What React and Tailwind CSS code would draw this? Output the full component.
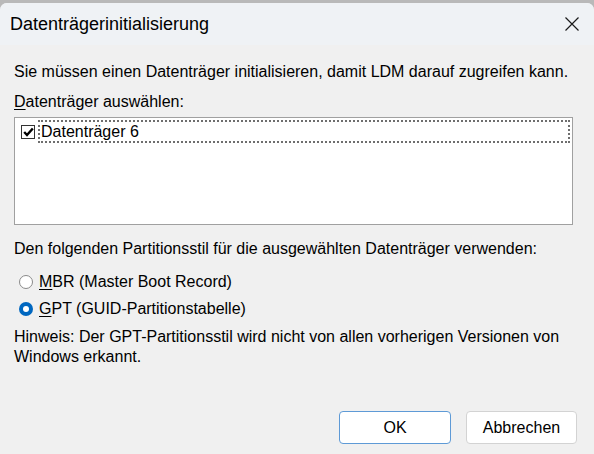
import React from "react";

const Radio = ({ checked }) =>
    checked ? (
        <span className="w-[14px] h-[14px] rounded-full bg-[#0067c0] flex items-center justify-center shrink-0">
            <span className="w-[6px] h-[6px] rounded-full bg-white" />
        </span>
    ) : (
        <span className="w-[14px] h-[14px] rounded-full border border-[#8a8a8a] bg-white shrink-0" />
    );

export default function App() {
    return (
        <div className="w-[594px] h-[454px] bg-[#b9b9b9] pt-[3px] overflow-hidden font-['Liberation_Sans',Arial,sans-serif] text-black">
            <div className="h-[451px] rounded-t-[7px] bg-[#f0f0f0] flex flex-col">
                <div className="h-[42px] bg-[#eff2f5] rounded-t-[7px] flex items-center justify-between pl-[10px] pr-[12px]">
                    <span className="text-[18px] leading-none">Datenträgerinitialisierung</span>
                    <svg width="16" height="16" viewBox="0 0 16 16" className="mr-[2px]">
                        <path d="M1.5 1.5 L14.5 14.5 M14.5 1.5 L1.5 14.5" stroke="#1a1a1a" strokeWidth="1.2" fill="none" />
                    </svg>
                </div>

                <div className="flex flex-col px-[14px] text-[16px] leading-[18px]">
                    <p className="mt-[18px]">Sie müssen einen Datenträger initialisieren, damit LDM darauf zugreifen kann.</p>
                    <p className="mt-[12px]"><span className="underline underline-offset-2">D</span>atenträger auswählen:</p>

                    <div className="mt-[6px] h-[108px] w-[559px] border border-[#a0a0a0] bg-white p-[2px]">
                        <div className="flex items-center h-[23px]">
                            <span className="ml-[4px] w-[14px] h-[14px] border border-[#333] bg-white flex items-center justify-center shrink-0">
                                <svg width="11" height="10" viewBox="0 0 11 10">
                                    <path d="M1.2 5 L4 8 L9.8 1.5" stroke="#000" strokeWidth="2.4" fill="none" />
                                </svg>
                            </span>
                            <div className="ml-[3px] flex-1 h-full border-[2px] border-dotted border-[#6e6e6e] flex items-center pl-[1px]">
                                Datenträger 6
                            </div>
                        </div>
                    </div>

                    <p className="mt-[15px]">Den folgenden Partitionsstil für die ausgewählten Datenträger verwenden:</p>

                    <div className="mt-[15px] flex items-center gap-[6px] pl-[5px]">
                        <Radio />
                        <span><span className="underline underline-offset-2">M</span>BR (Master Boot Record)</span>
                    </div>
                    <div className="mt-[9px] flex items-center gap-[6px] pl-[5px]">
                        <Radio checked />
                        <span><span className="underline underline-offset-2">G</span>PT (GUID-Partitionstabelle)</span>
                    </div>

                    <p className="mt-[9px] leading-[20px]">Hinweis: Der GPT-Partitionsstil wird nicht von allen vorherigen Versionen von Windows erkannt.</p>
                </div>

                <div className="mt-auto mb-[10px] flex justify-end gap-[15px] pr-[17px]">
                    <button className="w-[112px] h-[33px] rounded-[4px] border border-[#5e9ad6] bg-white text-[16px]">OK</button>
                    <button className="w-[111px] h-[33px] rounded-[4px] border border-[#d3d3d3] bg-white text-[16px]">Abbrechen</button>
                </div>
            </div>
        </div>
    );
}
